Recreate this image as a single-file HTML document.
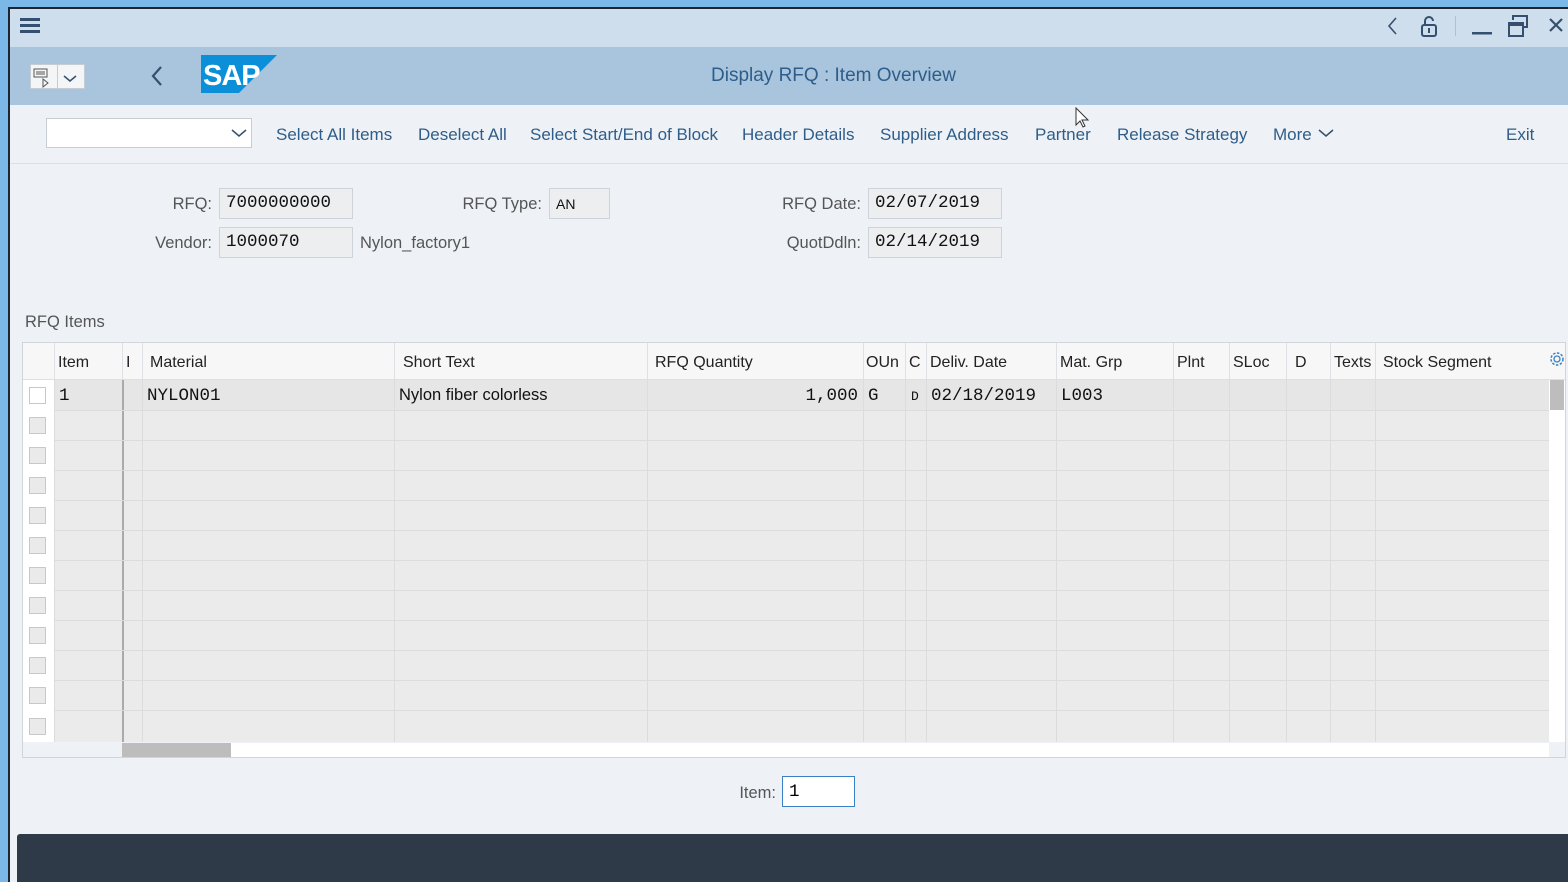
<!DOCTYPE html>
<html><head><meta charset="utf-8"><style>
*{box-sizing:border-box;margin:0;padding:0}
body{width:1568px;height:882px;overflow:hidden;background:#7bb8e8;font-family:"Liberation Sans",Arial,sans-serif;position:relative}
.a{position:absolute}
#app{left:8px;top:7px;width:1560px;height:875px;background:#eef2f7;border-top:2px solid #1c2530;border-left:2px solid #1c2530}
.lnk{color:#2f5d8a;font-size:17px;top:125px}
.lbl{color:#555;font-size:16.5px;text-align:right}
.fld{background:#eceef0;border:1px solid #cdd3d9;font-size:17.5px;color:#111;padding:4px 6px;height:31px;font-family:"Liberation Mono",monospace}
.th{top:343px;height:37px;font-size:16px;color:#222;line-height:39px;padding-left:3px;border-left:1px solid #dde1e5}
.vl{top:380px;height:362px;border-left:1px solid #dcdcdc}
.hl{left:54px;width:1495px;height:1px;background:#dcdcdc}
.cb{left:29px;width:17px;height:17px;border:1px solid #c8c8c8;background:#eaeaea}
.cell{top:386px;font-size:17.5px;font-family:"Liberation Mono",monospace;color:#111}
</style></head><body>
<div id="app" class="a"></div>
<div class="a" style="left:10px;top:9px;width:1558px;height:38px;background:#cfdeec"></div>
<div class="a" style="left:20px;top:18px;width:20px;height:3px;background:#35506e;box-shadow:0 6px 0 #35506e,0 12px 0 #35506e"></div>
<svg class="a" style="left:1380px;top:12px" width="188" height="30" viewBox="0 0 188 30">
<path d="M16 6 L9 14 L16 22" fill="none" stroke="#35506e" stroke-width="1.6"/>
<rect x="42" y="13" width="14" height="11" rx="2" fill="none" stroke="#35506e" stroke-width="2"/>
<path d="M45 13 V9 a4 4 0 0 1 8 0" fill="none" stroke="#35506e" stroke-width="2"/>
<rect x="48" y="16" width="2" height="5" fill="#35506e"/>
<rect x="75" y="4" width="1" height="20" fill="#b0c0d0"/>
<rect x="92" y="20" width="20" height="2.5" fill="#35506e"/>
<rect x="129" y="11" width="14" height="13" fill="none" stroke="#35506e" stroke-width="2"/>
<rect x="129" y="11" width="14" height="3" fill="#35506e"/>
<path d="M133 8 V4 H147 V15 H144" fill="none" stroke="#35506e" stroke-width="2"/>
<path d="M170 7 L182 19 M182 7 L170 19" stroke="#35506e" stroke-width="2.2"/>
</svg>
<div class="a" style="left:10px;top:47px;width:1558px;height:58px;background:#a9c5dd"></div>
<div class="a" style="left:30px;top:64px;width:55px;height:25px;background:#f3f5f7;border:1px solid #c5ccd4"></div>
<div class="a" style="left:57px;top:64px;width:1px;height:25px;background:#c5ccd4"></div>
<svg class="a" style="left:32px;top:67px" width="52" height="22"><rect x="2" y="2" width="13" height="8" fill="none" stroke="#555" stroke-width="1"/><path d="M4 5h9M4 7h9M11 12l5 4-5 4z" stroke="#555" fill="none" stroke-width="1"/><path d="M32 9l6 5 6-5" fill="none" stroke="#35506e" stroke-width="1.5"/></svg>
<svg class="a" style="left:148px;top:64px" width="20" height="24"><path d="M13 3L5 12l8 9" fill="none" stroke="#35506e" stroke-width="2.2"/></svg>
<svg class="a" style="left:201px;top:55px" width="76" height="38"><polygon points="0,0 76,0 38,38 0,38" fill="#0a8fd8"/><text x="2" y="30" font-family="Liberation Sans" font-weight="bold" font-size="29" letter-spacing="-1" fill="#fff">SAP</text></svg>
<div class="a" style="left:711px;top:65px;font-size:19px;color:#2f5d8a">Display RFQ : Item Overview</div>
<div class="a" style="left:10px;top:163px;width:1558px;height:1px;background:#d8e0e8"></div>
<div class="a" style="left:46px;top:118px;width:206px;height:30px;background:#fff;border:1px solid #c5ccd4"></div>
<svg class="a" style="left:230px;top:127px" width="18" height="12"><path d="M2 3l7 6 7-6" fill="none" stroke="#35506e" stroke-width="1.5"/></svg>
<div class="a lnk" style="left:276px">Select All Items</div>
<div class="a lnk" style="left:418px">Deselect All</div>
<div class="a lnk" style="left:530px">Select Start/End of Block</div>
<div class="a lnk" style="left:742px">Header Details</div>
<div class="a lnk" style="left:880px">Supplier Address</div>
<div class="a lnk" style="left:1035px">Partner</div>
<div class="a lnk" style="left:1117px">Release Strategy</div>
<div class="a lnk" style="left:1273px">More</div>
<svg class="a" style="left:1317px;top:127px" width="18" height="12"><path d="M2 3l7 6 7-6" fill="none" stroke="#35506e" stroke-width="1.5"/></svg>
<div class="a lnk" style="left:1506px">Exit</div>
<svg class="a" style="left:1075px;top:107px" width="16" height="22"><path d="M1 1v17l4-4 3 6 2-1-3-6h6z" fill="#fff" stroke="#333" stroke-width="1"/></svg>
<div class="a lbl" style="left:100px;width:112px;top:195px">RFQ:</div>
<div class="a fld" style="left:219px;top:188px;width:134px">7000000000</div>
<div class="a lbl" style="left:100px;width:112px;top:234px">Vendor:</div>
<div class="a fld" style="left:219px;top:227px;width:134px">1000070</div>
<div class="a" style="left:360px;top:234px;font-size:16.5px;color:#555">Nylon_factory1</div>
<div class="a lbl" style="left:400px;width:142px;top:195px">RFQ Type:</div>
<div class="a fld" style="left:549px;top:188px;width:61px;font-family:'Liberation Sans';font-size:14px;padding-top:7px">AN</div>
<div class="a lbl" style="left:700px;width:161px;top:195px">RFQ Date:</div>
<div class="a fld" style="left:868px;top:188px;width:134px">02/07/2019</div>
<div class="a lbl" style="left:700px;width:161px;top:234px">QuotDdln:</div>
<div class="a fld" style="left:868px;top:227px;width:134px">02/14/2019</div>
<div class="a" style="left:25px;top:313px;font-size:16.5px;color:#555">RFQ Items</div>
<div class="a" style="left:22px;top:342px;width:1544px;height:416px;border:1px solid #d0d5da;background:#eef2f7"></div>
<div class="a" style="left:23px;top:343px;width:1542px;height:37px;background:#f7f7f7;border-bottom:1px solid #dde1e5"></div>
<div class="a" style="left:54px;top:380px;width:1495px;height:362px;background:#ebebeb"></div>
<div class="a" style="left:23px;top:380px;width:31px;height:362px;background:#fff"></div>
<div class="a" style="left:54px;top:380px;width:1495px;height:30px;background:#e6e6e6"></div>
<div class="a th" style="left:54px">Item</div>
<div class="a th" style="left:122px">I</div>
<div class="a th" style="left:142px;padding-left:7px">Material</div>
<div class="a th" style="left:394px;padding-left:8px">Short Text</div>
<div class="a th" style="left:647px;padding-left:7px">RFQ Quantity</div>
<div class="a th" style="left:863px;padding-left:2px">OUn</div>
<div class="a th" style="left:905px">C</div>
<div class="a th" style="left:926px">Deliv. Date</div>
<div class="a th" style="left:1056px">Mat. Grp</div>
<div class="a th" style="left:1173px">Plnt</div>
<div class="a th" style="left:1229px">SLoc</div>
<div class="a th" style="left:1286px;padding-left:8px">D</div>
<div class="a th" style="left:1330px">Texts</div>
<div class="a th" style="left:1375px;width:174px;padding-left:7px">Stock Segment</div>
<svg class="a" style="left:1549px;top:351px" width="16" height="16"><circle cx="8" cy="8" r="3" fill="none" stroke="#3b82c4" stroke-width="1.3"/><circle cx="8" cy="8" r="6" fill="none" stroke="#3b82c4" stroke-width="1.5" stroke-dasharray="2.5 1.5"/></svg>
<div class="a vl" style="left:54px"></div>
<div class="a vl" style="left:122px;border-left:2px solid #aaa"></div>
<div class="a vl" style="left:142px"></div>
<div class="a vl" style="left:394px"></div>
<div class="a vl" style="left:647px"></div>
<div class="a vl" style="left:863px"></div>
<div class="a vl" style="left:905px"></div>
<div class="a vl" style="left:926px"></div>
<div class="a vl" style="left:1056px"></div>
<div class="a vl" style="left:1173px"></div>
<div class="a vl" style="left:1229px"></div>
<div class="a vl" style="left:1286px"></div>
<div class="a vl" style="left:1330px"></div>
<div class="a vl" style="left:1375px"></div>
<div class="a hl" style="top:410px"></div><div class="a hl" style="top:440px"></div><div class="a hl" style="top:470px"></div><div class="a hl" style="top:500px"></div><div class="a hl" style="top:530px"></div><div class="a hl" style="top:560px"></div><div class="a hl" style="top:590px"></div><div class="a hl" style="top:620px"></div><div class="a hl" style="top:650px"></div><div class="a hl" style="top:680px"></div><div class="a hl" style="top:710px"></div>
<div class="a cb" style="top:387px;background:#fff"></div>
<div class="a cb" style="top:417px"></div><div class="a cb" style="top:447px"></div><div class="a cb" style="top:477px"></div><div class="a cb" style="top:507px"></div><div class="a cb" style="top:537px"></div><div class="a cb" style="top:567px"></div><div class="a cb" style="top:597px"></div><div class="a cb" style="top:627px"></div><div class="a cb" style="top:657px"></div><div class="a cb" style="top:687px"></div><div class="a cb" style="top:718px"></div>
<div class="a cell" style="left:59px">1</div>
<div class="a cell" style="left:147px">NYLON01</div>
<div class="a cell" style="left:399px;font-family:'Liberation Sans';font-size:16.5px">Nylon fiber colorless</div>
<div class="a cell" style="left:650px;width:208px;text-align:right">1,000</div>
<div class="a cell" style="left:868px">G</div>
<div class="a cell" style="left:911px;font-size:13px;top:389px">D</div>
<div class="a cell" style="left:931px">02/18/2019</div>
<div class="a cell" style="left:1061px">L003</div>
<div class="a" style="left:1549px;top:380px;width:16px;height:362px;background:#fff"></div>
<div class="a" style="left:1550px;top:380px;width:14px;height:30px;background:#bdbdbd"></div>
<div class="a" style="left:122px;top:743px;width:1427px;height:14px;background:#fff"></div>
<div class="a" style="left:122px;top:743px;width:109px;height:14px;background:#bdbdbd"></div>
<div class="a lbl" style="left:700px;width:76px;top:784px">Item:</div>
<div class="a" style="left:782px;top:776px;width:73px;height:31px;background:#fff;border:1px solid #3b7fc4;font-size:17.5px;padding:5px 6px;font-family:'Liberation Mono',monospace">1</div>
<div class="a" style="left:17px;top:834px;width:1551px;height:48px;background:#2e3a47;border-radius:3px 0 0 0"></div>
</body></html>
